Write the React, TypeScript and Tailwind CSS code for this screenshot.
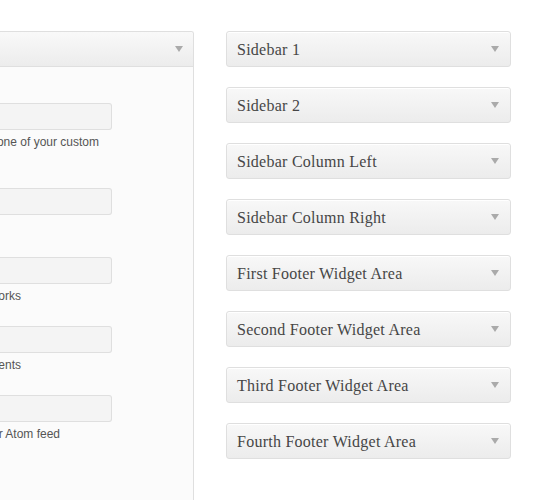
const sidebars = [
  "Sidebar 1",
  "Sidebar 2",
  "Sidebar Column Left",
  "Sidebar Column Right",
  "First Footer Widget Area",
  "Second Footer Widget Area",
  "Third Footer Widget Area",
  "Fourth Footer Widget Area",
];

// lines: how many description lines the field has (only the first may show)
const fields = [
  { desc: "Select one of your custom", lines: 2, end: "w-[99px]" },
  { desc: "", lines: 1, end: "w-[99px]" },
  { desc: "Links to your social networks", lines: 1, end: "w-[21px]" },
  { desc: "Number of recent comments", lines: 1, end: "w-[21px]" },
  { desc: "Enter the URL of your Atom feed", lines: 1, end: "w-[60px]" },
];

const Arrow = () => (
  <svg width="8" height="6" viewBox="0 0 8 6" className="flex-none">
    <polygon points="0,0 8,0 4,6" fill="#aaaaaa" />
  </svg>
);

const App = () => {
  return (
    <div className="flex h-[500px] overflow-hidden bg-white pt-[31px]">
      {/* left settings panel, mostly off-screen */}
      <div className="flex w-[194px] flex-none flex-col overflow-hidden rounded-tr-[3px] border-t border-r border-[#dfdfdf] bg-[#fbfbfb]">
        <div className="flex h-[35px] flex-none items-center justify-end border-b border-[#dfdfdf] bg-gradient-to-b from-[#f9f9f9] to-[#ececec] pr-[10px]">
          <Arrow />
        </div>
        <div className="flex flex-col gap-[22px] pt-[36px] font-['Liberation_Sans',Arial,sans-serif] text-[12px] leading-[16px] text-[#555555]">
          {fields.map((f, i) => (
            <div key={i} className="flex flex-col">
              <div className="h-[27px] w-[112px] rounded-r-[3px] border border-l-0 border-[#dfdfdf] bg-[#f4f4f4]" />
              <div className={`mt-[4px] ${f.lines === 2 ? "h-[32px]" : "h-[16px]"}`}>
                {f.desc && <div className={`flex justify-end whitespace-nowrap ${f.end}`}>{f.desc}</div>}
              </div>
            </div>
          ))}
        </div>
      </div>

      {/* widget areas */}
      <div className="ml-[32px] flex w-[285px] flex-none flex-col gap-[20px]">
        {sidebars.map((name) => (
          <div
            key={name}
            className="flex h-[36px] items-center justify-between rounded-[3px] border border-[#dfdfdf] bg-gradient-to-b from-[#f8f8f8] to-[#ececec] pl-[10px] pr-[11px] shadow-[inset_0_1px_0_#ffffff]"
          >
            <span className="pt-[2px] font-['Liberation_Serif',Georgia,serif] text-[16px] tracking-[0.25px] text-[#464646]">{name}</span>
            <Arrow />
          </div>
        ))}
      </div>
    </div>
  );
};

export default App;
